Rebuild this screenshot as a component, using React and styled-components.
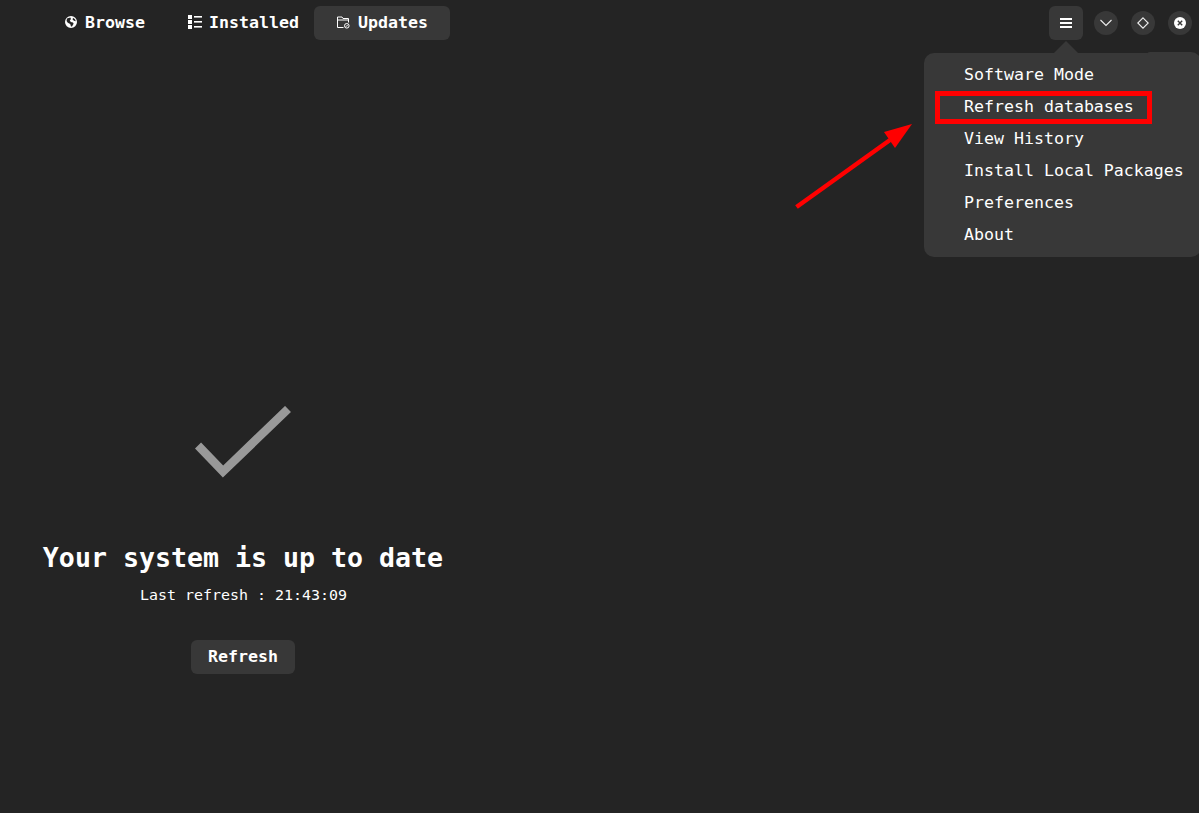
import React from "react";
import styled, { createGlobalStyle } from "styled-components";

const Global = createGlobalStyle`
  html, body { margin: 0; padding: 0; height: 100%; overflow: hidden; background: #242424; }
  #root { height: 100%; }
`;
const mono = `"DejaVu Sans Mono", monospace`;
const Page = styled.div`
  position: relative; width: 1199px; height: 813px; background: #242424; color: #fff;
  font-family: ${mono}; overflow: hidden;
`;
const Header = styled.header`
  height: 46px; display: flex; align-items: flex-start; padding: 6px 7px 0 46px; box-sizing: border-box;
`;
const Tabs = styled.nav`display: flex; gap: 0;`;
const Tab = styled.div`
  height: 34px; display: flex; align-items: center; gap: ${p => p.$gap}px; box-sizing: border-box;
  width: ${p => p.$w}px; padding: 0 0 2px ${p => p.$pl}px; border-radius: 6px;
  background: ${p => (p.$active ? "#383838" : "transparent")};
  font-size: 16.6px; font-weight: 700;
`;
const Controls = styled.div`margin-left: auto; display: flex; align-items: center; height: 34px;`;
const MenuButton = styled.div`
  width: 34px; height: 34px; border-radius: 6px; background: #383838; display: flex; align-items: center; justify-content: center;
  margin-right: 11px;
`;
const WinButton = styled.div`
  width: 24px; height: 24px; border-radius: 50%; background: #383838; display: flex; align-items: center; justify-content: center;
  margin-left: ${p => p.$ml || 0}px;
`;
const Popover = styled.div`
  position: absolute; left: 924px; top: 53px; width: 277px; height: 204px; background: #383838; border-radius: 10px;
  padding: 6px 0; box-sizing: border-box;
  &::before {
    content: ""; position: absolute; left: 130px; top: -12px; width: 0; height: 0;
    border-left: 12px solid transparent; border-right: 12px solid transparent; border-bottom: 12px solid #383838;
  }
  &::after {
    content: ""; position: absolute; left: 223px; top: -1px; width: 54px; height: 20px;
    background: #383838; border-radius: 3px 10px 0 0;
  }
`;
const MenuItem = styled.div`
  position: relative; z-index: 1;
  height: 32px; line-height: 32px; padding-left: 40px; font-size: 16.6px; color: #fff; white-space: nowrap;
`;
const Highlight = styled.div`
  position: absolute; left: 935px; top: 91px; width: 217px; height: 33px; box-sizing: border-box; border: 5px solid #f00;
`;
const Arrow = styled.svg`position: absolute; left: 790px; top: 118px;`;
const Status = styled.section`
  width: 486px; display: flex; flex-direction: column; align-items: center; padding-top: 360px;
`;
const Heading = styled.h1`
  margin: 61px 0 0; font-size: 26.6px; line-height: 38px; font-weight: 700;
`;
const Sub = styled.p`margin: 9px 0 0; padding-left: 1px; font-size: 14.95px; line-height: 18px;`;
const RefreshButton = styled.div`
  margin-top: 36px; width: 104px; height: 34px; border-radius: 6px; background: #383838; font-size: 16.6px; font-weight: 700;
  display: flex; align-items: center; justify-content: center; padding-bottom: 2px; box-sizing: border-box;
`;

const Globe = () => (
  <svg width="14" height="14" viewBox="0 0 14 14">
    <path fill="#fff" fillRule="evenodd" d="M7 1a6 6 0 1 0 0 12A6 6 0 0 0 7 1zM3 3.4 6.3 2.6 7 4 5.8 5.4 6.8 7l2.2.4.6 1.4L8 11.6l-1-.2-.8-2.3-2.4-1.4L2.6 6zM9 2.8l2 1.4.8 2-1.8-.4-1.4-1.3z"/>
  </svg>
);
const ListIcon = () => (
  <svg width="16" height="16" viewBox="0 0 16 16" fill="#fff">
    <rect x="1" y="1" width="4" height="4"/><rect x="1" y="6" width="4" height="4"/><rect x="1" y="11" width="4" height="4"/>
    <rect x="7" y="2" width="8" height="1.6"/><rect x="7" y="7" width="8" height="1.6"/><rect x="7" y="12" width="8" height="1.6"/>
  </svg>
);
const FolderIcon = () => (
  <svg width="14" height="14" viewBox="0 0 14 14" fill="none" stroke="#fff" strokeWidth="1">
    <path d="M7.5 12.5H1.5V2h4.5l1 1.5H12.5V7.5"/><path d="M1.5 5H12.5" />
    <circle cx="10.8" cy="10.8" r="2.3"/><path d="M9.8 11.8l2-2" />
  </svg>
);

export default function App() {
  return (
    <Page>
      <Global />
      <Header>
        <Tabs>
          <Tab $w={122} $pl={18} $gap={7}><Globe />Browse</Tab>
          <Tab $w={146} $pl={19} $gap={6}><ListIcon />Installed</Tab>
          <Tab $w={136} $active $pl={22} $gap={8}><FolderIcon />Updates</Tab>
        </Tabs>
        <Controls>
          <MenuButton>
            <svg width="12" height="10" viewBox="0 0 12 10" fill="#fff">
              <rect y="0" width="12" height="2"/><rect y="4" width="12" height="2"/><rect y="8" width="12" height="2"/>
            </svg>
          </MenuButton>
          <WinButton>
            <svg width="14" height="10" viewBox="0 0 14 10" fill="none" stroke="#eee" strokeWidth="1.1"><path d="M1.5 2l5.5 5.5L12.5 2"/></svg>
          </WinButton>
          <WinButton $ml={13}>
            <svg width="12" height="12" viewBox="0 0 12 12" fill="none" stroke="#eee" strokeWidth="1.1"><path d="M6 .8 11.2 6 6 11.2.8 6z"/></svg>
          </WinButton>
          <WinButton $ml={13}>
            <svg width="12" height="12" viewBox="0 0 12 12"><circle cx="6" cy="6" r="6" fill="#fff"/><path d="M3.8 3.8l4.4 4.4M8.2 3.8 3.8 8.2" stroke="#383838" strokeWidth="1.4"/></svg>
          </WinButton>
        </Controls>
      </Header>
      <Status>
        <svg width="96" height="72" viewBox="0 0 96 72" fill="none">
          <path d="M3 39.5 L28 65.5 L93 3" stroke="#999" strokeWidth="8.5" />
        </svg>
        <Heading>Your system is up to date</Heading>
        <Sub>Last refresh : 21:43:09</Sub>
        <RefreshButton>Refresh</RefreshButton>
      </Status>
      <Popover>
        <MenuItem>Software Mode</MenuItem>
        <MenuItem>Refresh databases</MenuItem>
        <MenuItem>View History</MenuItem>
        <MenuItem>Install Local Packages</MenuItem>
        <MenuItem>Preferences</MenuItem>
        <MenuItem>About</MenuItem>
      </Popover>
      <Highlight />
      <Arrow width="130" height="95" viewBox="0 0 130 95" fill="none">
        <path d="M6.5 89 L100 22" stroke="#f00" strokeWidth="4.5"/>
        <path d="M122 6 L105 30 L94 14 Z" fill="#f00"/>
      </Arrow>
    </Page>
  );
}
